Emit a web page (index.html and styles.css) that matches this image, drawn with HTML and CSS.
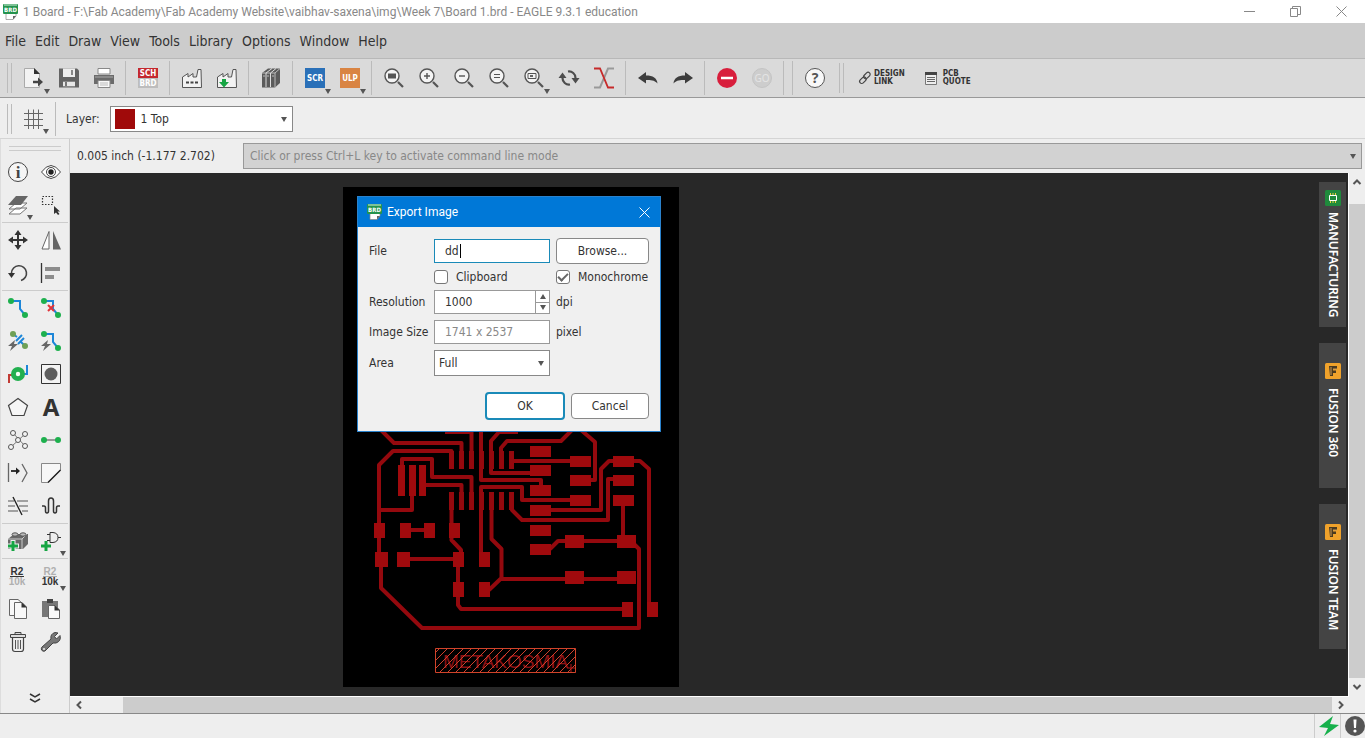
FILE: index.html
```html
<!DOCTYPE html>
<html lang="en">
<head>
<meta charset="utf-8">
<title>1 Board - EAGLE 9.3.1 education</title>
<link rel="stylesheet" href="styles.css">
</head>
<body>
<svg class="defs" aria-hidden="true">
  <symbol id="brd" viewBox="0 0 16 16"><path d="M3 8h10v4l-3 3.500H3z" fill="#fff" stroke="#888" stroke-width=".7"/><path d="M10 15.500V12h3z" fill="#666"/><rect x="0" y="0" width="15" height="10" rx="1" fill="#24934d"/><path d="M1 1h13" stroke="#d7f0df"/><text x="7.500" y="8" class="t-brd">BRD</text></symbol>
  <symbol id="lens" viewBox="-12.500 -12.500 25 25"><path d="M4 4L9 9" stroke="#555" stroke-width="2.200"/><circle cx="-2" cy="-2" r="7" fill="#f4f4f4" stroke="#555" stroke-width="1.400"/></symbol>
  <symbol id="fusion" viewBox="0 0 16 16"><rect width="16" height="16" rx="1.500" fill="#f0a22b"/><path d="M4 3h8v3H8v1.500h3V10H8v3H5z" fill="#4b3a20"/><path d="M6 4v8M8 6h4" stroke="#cf9b54" stroke-width="1"/></symbol>
</svg>

<header class="titlebar">
  <svg class="app-icon"><use href="#brd"/></svg>
  <h1>1 Board - F:\Fab Academy\Fab Academy Website\vaibhav-saxena\img\Week 7\Board 1.brd - EAGLE 9.3.1 education</h1>
  <div class="win-controls">
    <button aria-label="Minimize"><svg viewBox="0 0 11 11"><path d="M0 5.500h11"/></svg></button>
    <button aria-label="Restore"><svg viewBox="0 0 11 11"><path d="M.5 2.500h7v8h-7zM2.500 2.500v-2h8v8h-3"/></svg></button>
    <button aria-label="Close"><svg viewBox="0 0 11 11"><path d="M.5 .5l10 10M10.500 .5l-10 10"/></svg></button>
  </div>
</header>

<nav class="menubar">
  <button>File</button><button>Edit</button><button>Draw</button><button>View</button><button>Tools</button><button>Library</button><button>Options</button><button>Window</button><button>Help</button>
</nav>

<div class="toolbar">
  <span class="grip"></span>
  <button aria-label="Open"><svg class="ico"><path d="M-9.500 -9.500H.5L5.500 -4.500V9.500H-9.500z" fill="#f3f3f3" stroke="#aaa"/><path d="M0 -10V-4H6z" fill="#333"/><path d="M-1 4h6" stroke="#444" stroke-width="2.500"/><path d="M4 -.5L9 4L4 8.500z" fill="#444"/><path class="caret" d="M10 11h6l-3 5z"/></svg></button>
  <button aria-label="Save"><svg class="ico"><path d="M-10 -9.500H8L10 -7.500V9.500H-10z" fill="#636363"/><path d="M-6 -9.500H6V-1H-6z" fill="#ededed"/><path d="M2 -8h2v5H2zM-6 3H6V9H-6z" fill="#888"/><path d="M-6 4H6V8H-6z" fill="#e8e8e8"/><path d="M-4 4h2v4h-2z" fill="#777"/></svg></button>
  <button aria-label="Print"><svg class="ico"><path d="M-6 -9.500H6V-4H-6z" fill="#fff" stroke="#888"/><path d="M-10 -3H10V6H-10z" fill="#6b6b6b"/><path d="M-9 -1H9" stroke="#aaa"/><path d="M-6 2.500H6V9.500H-6z" fill="#f8f8f8" stroke="#888"/><path d="M-4 5h8M-4 7h8" stroke="#bbb"/></svg></button>
  <span class="sep"></span>
  <button aria-label="Schematic / Board"><svg class="ico"><path d="M-10 -10H10V0H-10z" fill="#c4282e"/><path d="M-10 0H10V10H-10z" fill="#bdbdbd"/><text x="0" y="-2" class="t-tag">SCH</text><text x="0" y="8" class="t-tag">BRD</text></svg></button>
  <span class="sep"></span>
  <button aria-label="CAM"><svg class="ico"><path d="M-9.500 9.500V-1L-4 -4.500V-1L1 -4.500V-1H4.500L6 -8.500H9L9.500 9.500z" fill="#f2f2f2" stroke="#555"/><path d="M-6 4.500H6" stroke="#444" stroke-width="2" stroke-dasharray="3 1.500"/></svg></button>
  <button aria-label="Export CAM"><svg class="ico"><path d="M-9.500 9.500V-1L-4 -4.500V-1L1 -4.500V-1H4.500L6 -8.500H9L9.500 9.500z" fill="#f2f2f2" stroke="#555"/><path d="M-5 1h4v3h3L-3 9.500L-8 4h3z" fill="#16a543"/></svg></button>
  <span class="sep"></span>
  <button aria-label="Library manager"><svg class="ico"><path d="M-9 -5L-3 -9.500H9V5L4 9.500H-9z" fill="#5b5b5b"/><path d="M-9 -5H4V9.500M4 -5L9 -9.500" fill="none" stroke="#bbb"/><path d="M-5 -5V9M-.5 -5V9M-5 -5L1 -9.500M-.5 -5L5 -9.500" stroke="#ddd"/><path d="M-8 -2h2M-4 -2h2M1 -2h2" stroke="#bbb"/></svg></button>
  <span class="sep"></span>
  <button aria-label="Script"><svg class="ico"><path d="M-10 -10H10V10H-10z" fill="#2a70b8"/><text x="0" y="3" class="t-tag">SCR</text><path class="caret" d="M10 11h6l-3 5z"/></svg></button>
  <button aria-label="ULP"><svg class="ico"><path d="M-10 -10H10V10H-10z" fill="#d98443"/><text x="0" y="3" class="t-tag">ULP</text><path class="caret" d="M10 11h6l-3 5z"/></svg></button>
  <span class="sep"></span>
  <button aria-label="Zoom fit"><svg class="ico"><use href="#lens" x="-12.500" y="-12.500" width="25" height="25"/><path d="M-6 -4.500H2V.5H-6z" fill="#555"/></svg></button>
  <button aria-label="Zoom in"><svg class="ico"><use href="#lens" x="-12.500" y="-12.500" width="25" height="25"/><path d="M-5 -2H1M-2 -5V1" stroke="#555" stroke-width="1.400"/></svg></button>
  <button aria-label="Zoom out"><svg class="ico"><use href="#lens" x="-12.500" y="-12.500" width="25" height="25"/><path d="M-5 -2H1" stroke="#555" stroke-width="1.400"/></svg></button>
  <button aria-label="Zoom redraw"><svg class="ico"><use href="#lens" x="-12.500" y="-12.500" width="25" height="25"/><path d="M-5 -3.500H1M-5 -.5H1" stroke="#555" stroke-width="1.200"/></svg></button>
  <button aria-label="Zoom select"><svg class="ico"><use href="#lens" x="-12.500" y="-12.500" width="25" height="25"/><path d="M-6 -4.500H2V.5H-6z" fill="none" stroke="#555"/><path d="M-4 -3h3v2h-3z" fill="#666"/><path class="caret" d="M10 11h6l-3 5z"/></svg></button>
  <button aria-label="Refresh"><svg class="ico"><path d="M-1 -6.500A6.500 6.500 0 0 1 6.500 0M1 6.500A6.500 6.500 0 0 1 -6.500 0" fill="none" stroke="#4d4d4d" stroke-width="2.200"/><path d="M2.500 0H10.500L6.500 5.500zM-10.500 0H-2.500L-6.500 -5.500z" fill="#4d4d4d"/></svg></button>
  <button aria-label="Swap"><svg class="ico"><path d="M-10 9.500H-4L4 -9.500H10" fill="none" stroke="#999" stroke-width="2"/><path d="M-10 -9.500H-4L4 9.500H10" fill="none" stroke="#c62a2a" stroke-width="1.800"/></svg></button>
  <span class="sep"></span>
  <button aria-label="Undo"><svg class="ico"><path d="M-10 0L-2 -6V-2.500C5 -2.500 9 0 9.500 5.500C6 2 3 2 -2 2V5.500z" fill="#3d3d3d"/></svg></button>
  <button aria-label="Redo"><svg class="ico"><path d="M10 0L2 -6V-2.500C-5 -2.500 -9 0 -9.500 5.500C-6 2 -3 2 2 2V5.500z" fill="#3d3d3d"/></svg></button>
  <span class="sep"></span>
  <button aria-label="Stop"><svg class="ico"><circle r="10" fill="#d81e3c"/><path d="M-6 0H6" stroke="#fff" stroke-width="2.500"/></svg></button>
  <button aria-label="Go" disabled><svg class="ico"><circle r="9.500" fill="#cdcdcd" stroke="#c4c4c4"/><text x="0" y="4" class="t-go">GO</text></svg></button>
  <span class="sep"></span><span class="sep"></span>
  <button aria-label="Help"><svg class="ico"><circle r="9.500" fill="#f8f8f8" stroke="#555"/><text x="0" y="5" class="t-help">?</text></svg></button>
  <span class="grip"></span>
  <button class="wide"><svg viewBox="0 0 12 12" width="12" height="12"><g fill="none" stroke="#444" stroke-width="1.200"><rect x="4.500" y="1.500" width="7.500" height="4.200" rx="2.100" transform="rotate(-45 8 4)"/><rect x="0" y="6" width="7.500" height="4.200" rx="2.100" transform="rotate(-45 4 8)"/></g></svg><span>DESIGN<br>LINK</span></button>
  <button class="wide"><svg viewBox="0 0 12 13" width="12" height="13"><path d="M.5 .5h11v12H.5z" fill="#eee" stroke="#777"/><path d="M0 1.500h12" stroke="#444" stroke-width="3"/><path d="M2 5.500h8M2 7.500h8M2 9.500h8" stroke="#666"/></svg><span>PCB<br>QUOTE</span></button>
</div>

<div class="layerbar">
  <span class="grip"></span>
  <button aria-label="Grid"><svg class="ico"><path d="M-10 -5.500H9M-10 .5H9M-10 6.500H9M-5.500 -9.500V10M-.5 -9.500V10M4.500 -9.500V10" stroke="#666"/><path class="caret" d="M9 10h6l-3 5z"/></svg></button>
  <span class="sep"></span>
  <label for="layer">Layer:</label>
  <div class="pick layer"><i class="swatch"></i><select id="layer"><option>1 Top</option></select><svg viewBox="0 0 6 5"><path class="caret" d="M0 0h6l-3 5z"/></svg></div>
</div>

<div class="work">
  <aside class="palette">
    <span class="hgrip"></span>
    <div class="tools">
      <button aria-label="Info"><svg class="ico"><circle r="9.500" fill="#f5f5f5" stroke="#444"/><text x="0" y="6" class="t-info">i</text></svg></button>
      <button aria-label="Show"><svg class="ico"><path d="M-9.500 0Q0 -13 9.500 0Q0 13 -9.500 0z" fill="#fff" stroke="#444"/><circle r="4.500" fill="#fff" stroke="#444"/><circle r="2.700" fill="#222"/></svg></button>
      <button aria-label="Layers"><svg class="ico"><path d="M-9 9L-2 3H9L2 9zM-9 4L-2 -2H9L2 4z" fill="#fff" stroke="#777"/><path d="M-10 0L-2 -9H10L3 0z" fill="#666"/><path class="caret" d="M9 10h6l-3 5z"/></svg></button>
      <button aria-label="Select"><svg class="ico"><path d="M-8.500 -8.500H1.500V-.5H-8.500z" fill="none" stroke="#333" stroke-width="1.200" stroke-dasharray="1.500 1.500"/><path d="M3 1L3 9L5 7.500L7 10L8.500 9L6.500 6.500H9z" fill="#333"/></svg></button>
    </div>
    <div class="tools">
      <button aria-label="Move"><svg class="ico"><path d="M-8 0H8M0 -8V8" stroke="#333" stroke-width="2"/><path d="M-10 0L-5 -3.500V3.500zM10 0L5 -3.500V3.500zM0 -10L-3.500 -5H3.500zM0 10L-3.500 5H3.500z" fill="#333"/></svg></button>
      <button aria-label="Mirror"><svg class="ico"><path d="M-2 -8.500V9H-9z" fill="#fff" stroke="#666"/><path d="M2 -9V9.500H10z" fill="#666"/></svg></button>
      <button aria-label="Rotate"><svg class="ico"><path d="M-6.500 0A7.500 7.500 0 1 1 3 7.500" fill="none" stroke="#444" stroke-width="1.600"/><path d="M-10 0H-3L-6.500 5z" fill="#333"/></svg></button>
      <button aria-label="Align"><svg class="ico"><path d="M-9.500 -10V10" stroke="#333" stroke-width="1.300"/><path d="M-6 -6H9V-2H-6zM-6 2H3V6H-6z" fill="#8c8c8c"/></svg></button>
    </div>
    <div class="tools">
      <button aria-label="Route"><svg class="ico"><path class="wire" d="M-7 -7H2V1L7 7"/><circle class="dot" cx="-7" cy="-7" r="3"/><circle class="dot" cx="7" cy="7" r="3"/></svg></button>
      <button aria-label="Ripup"><svg class="ico"><path class="wire" d="M-7 -7H2V1L7 7"/><circle class="dot" cx="-7" cy="-7" r="3"/><circle class="dot" cx="7" cy="7" r="3"/><path d="M-3 -3L3 3M3 -3L-3 3" stroke="#e0343a" stroke-width="2"/></svg></button>
      <button aria-label="Fast route"><svg class="ico"><path class="wire" d="M-5 -7L-1 -4M3 1L7 5M-2 0L4 -6M0 3L6 -3"/><circle class="leaf" cx="-5" cy="-7" r="3"/><circle class="leaf" cx="7" cy="5" r="3"/><path class="bolt" d="M-3 -1L-10 5H-6L-8 10L0 3H-4z"/></svg></button>
      <button aria-label="Auto route"><svg class="ico"><path class="wire" d="M-7 -7H2V1L7 7"/><circle class="dot" cx="-7" cy="-7" r="3"/><circle class="dot" cx="7" cy="7" r="3"/><path class="bolt" d="M-3 -1L-10 5H-6L-8 10L0 3H-4z"/></svg></button>
      <button aria-label="Via"><svg class="ico"><path d="M-9 9V1H-3" fill="none" stroke="#c23b35" stroke-width="2"/><path class="wire" d="M3 0H9V-9"/><circle r="7" fill="#22b04f"/><circle r="2.200" fill="#f4fff4"/></svg></button>
      <button aria-label="Hole"><svg class="ico"><path d="M-9.500 -9.500H9.500V9.500H-9.500z" fill="#f3f3f3" stroke="#333"/><circle r="6.500" fill="#5e5e5e"/></svg></button>
      <button aria-label="Polygon"><svg class="ico"><path d="M0 -8.500L9.500 -1.500L6 8.500H-6L-9.500 -1.500z" fill="#f6f6f6" stroke="#444" stroke-width="1.200"/></svg></button>
      <button aria-label="Text"><svg class="ico"><text x="0" y="9" class="t-a">A</text></svg></button>
      <button aria-label="Ratsnest"><svg class="ico"><path d="M-7 7L7 -6M-5 -7L7 6" stroke="#777"/><g fill="#f4f4f4" stroke="#555"><circle cx="-5" cy="-7" r="2.500"/><circle cx="7" cy="-6" r="2.500"/><circle cx="-7" cy="7" r="2.500"/><circle cx="7" cy="6" r="2.500"/><circle cx="0" cy="0" r="2.500"/></g></svg></button>
      <button aria-label="Signal"><svg class="ico"><path d="M-7 0H7" stroke="#999" stroke-width="2"/><circle class="dot" cx="-7" r="3"/><circle class="dot" cx="7" r="3"/></svg></button>
      <button aria-label="Split"><svg class="ico"><path d="M-9.500 -10V9M4 -9L9 0L4 9" fill="none" stroke="#666" stroke-width="1.300"/><path d="M-7 -2H0" stroke="#222" stroke-width="1.800"/><path d="M-2 -5.500L2 -2L-2 1.500z" fill="#222"/></svg></button>
      <button aria-label="Miter"><svg class="ico"><path d="M-9.500 9.500V-9.500H9.500V-3L-3 9.500z" fill="#f7f7f7" stroke="#888"/><path d="M9.500 -3L-3 9.500" stroke="#222" stroke-width="1.500"/></svg></button>
      <button aria-label="Slice"><svg class="ico"><path d="M-10 -5H-4M-1 -5H10M-10 0H-3M1 0H10M-10 5H0M4 5H10" stroke="#888" stroke-width="1.300"/><path d="M-5 -9L4 9" stroke="#222" stroke-width="1.400"/></svg></button>
      <button aria-label="Meander"><svg class="ico"><path d="M-9 0H-7Q-5.500 0 -5.500 2V5Q-5.500 7 -4 7Q-2.500 7 -2.500 5V-5Q-2.500 -8 0 -8Q2.500 -8 2.500 -5V5Q2.500 7 4 7Q5.500 7 5.500 5V2Q5.500 0 7 0H9" fill="none" stroke="#333" stroke-width="1.500"/></svg></button>
    </div>
    <div class="tools">
      <button aria-label="Add part"><svg class="ico"><path d="M-10 -2L-4 -7H10V3L5 8H-10z" fill="#696969"/><path d="M-10 -2H4L9 -7M4 -2V8" fill="none" stroke="#ccc"/><g fill="#bbb" stroke="#555"><ellipse cx="-3" cy="-6.500" rx="3" ry="1.700"/><ellipse cx="5" cy="-6.500" rx="3" ry="1.700"/></g><path d="M-11 5H1M-5 -1V11" stroke="#eee" stroke-width="5"/><path class="plus" d="M-10 5H0M-5 0V10"/></svg></button>
      <button aria-label="Add gate"><svg class="ico"><path d="M-1 -8.500H2Q7 -8 7 -3.500Q7 1 2 1.500H-1zM-4 -6.500H-1M-4 -.5H-1M7 -3.500H10" fill="none" stroke="#333"/><path class="plus" d="M-10 5H0M-5 0V10"/><path class="caret" d="M9 10h6l-3 5z"/></svg></button>
    </div>
    <div class="tools">
      <button aria-label="Name"><svg class="ico"><text x="-1" y="-1" class="t-r">R2</text><path d="M-8 .5H6" stroke="#333"/><text x="-1" y="9" class="t-r pale">10k</text></svg></button>
      <button aria-label="Value"><svg class="ico"><text x="-1" y="-1" class="t-r pale">R2</text><path d="M-8 .5H6" stroke="#aaa"/><text x="-1" y="9" class="t-r">10k</text><path class="caret" d="M9 10h6l-3 5z"/></svg></button>
      <button aria-label="Copy"><svg class="ico"><path d="M-8.500 -9.500H0L4 -6V6.500H-8.500z" fill="#f8f8f8" stroke="#666"/><path d="M-3.500 -6.500H4L8.500 -2V9.500H-3.500z" fill="#f8f8f8" stroke="#666"/><path d="M3.500 -7L9 -1.500H3.500z" fill="#333"/></svg></button>
      <button aria-label="Paste"><svg class="ico"><path d="M-9 -8H7V8H-9z" fill="#777"/><path d="M-4 -10H2V-6H-4z" fill="#444"/><path d="M-2.500 -3.500H4L8.500 1V9.500H-2.500z" fill="#fafafa" stroke="#666"/><path d="M3.500 -4L9 1.500H3.500z" fill="#333"/></svg></button>
      <button aria-label="Delete"><svg class="ico"><path d="M-5.500 -4.500H5.500V7Q5.500 9.500 3 9.500H-3Q-5.500 9.500 -5.500 7z" fill="#eee" stroke="#444" stroke-width="1.200"/><path d="M-7.500 -7.500H7.500V-4.500H-7.500zM-3 -7.500V-9.500H3V-7.500" fill="#ddd" stroke="#444"/><path d="M-2.500 -2V7M0 -2V7M2.500 -2V7" stroke="#555"/></svg></button>
      <button aria-label="Properties"><svg class="ico"><path d="M-9 5L0 -3Q-1 -8 4 -9.500L7 -9L3.500 -5.500L5.500 -3L9 -6.500Q10.500 -1 5 1L2 1L-6 9Q-8 10 -9.500 8Q-10 6 -9 5z" fill="#777" stroke="#444"/><circle cx="-7" cy="7" r="1" fill="#eee"/></svg></button>
    </div>
    <button class="more" aria-label="More tools"><svg viewBox="0 0 10 10" width="10" height="10"><path d="M0 1l5 3l5-3M0 6l5 3l5-3" fill="none" stroke="#333" stroke-width="1.500"/></svg></button>
  </aside>

  <main class="main">
    <div class="command">
      <output>0.005 inch (-1.177 2.702)</output>
      <div class="cmd-field"><input type="text" aria-label="Command line" placeholder="Click or press Ctrl+L key to activate command line mode"><svg viewBox="0 0 6 5"><path class="caret" d="M0 0h6l-3 5z"/></svg></div>
    </div>
    <div class="viewport">
      <div class="canvas">
        <svg class="board" viewBox="343 187 336 500" role="img" aria-label="Board layout">
          <defs><pattern id="hatch" width="8" height="8" patternUnits="userSpaceOnUse"><path d="M-1 9L9 -1M-1 1L1 -1M7 9L9 7" stroke="#d0402c" stroke-width="1"/></pattern></defs>
          <path fill="#000" d="M343 187h336v500H343z"/>
          <g class="trace">
            <path d="M381 430L394 443H461.500V469M379 540V465L393 451H451.500V469M402 467V459H432V477H471.500V510M422 485H461.500V510M412 496V510H379M451.500 492V540L461 550V560"/>
            <path d="M445 432H471.500V469M481 432V480H541V487M518 432H499L491 441V473H531M572 430L561 441H507L501 448V469M511.500 451V469M512 461H571M581 430L595 442V480H591"/>
            <path d="M613 461H609L601 469V510H550M634 461H640L649 469V603M613 479H608V520H522L512 510V492M623 506V536M565 541H558L550 549M584 541H618M634 544L639 549V628H422L381 588V560"/>
            <path d="M481 553V487H522V500H571M491.500 492V539L501.500 549V578L489 590M501 579H617M501.500 492V510M458 567V605L461 609H622M411 530H424M410 559H453M379 538V553M458 567V583"/>
          </g>
          <path class="pin" d="M449 451h5v18h-5zM459 451h5v18h-5zM469 451h5v18h-5zM479 451h5v18h-5zM489 451h5v18h-5zM499 451h5v18h-5zM509 451h5v18h-5zM449 492h5v18h-5zM459 492h5v18h-5zM469 492h5v18h-5zM479 492h5v18h-5zM489 492h5v18h-5zM499 492h5v18h-5zM509 492h5v18h-5z"/>
          <path class="pad" d="M398 465h7v31h-7zM409 465h7v31h-7zM419 465h7v31h-7zM530 446h21v11h-21zM530 465h21v11h-21zM530 485h21v11h-21zM530 505h21v11h-21zM530 525h21v11h-21zM530 544h21v11h-21zM570 456h21v11h-21zM570 475h21v11h-21zM570 495h21v11h-21zM613 456h21v11h-21zM613 475h21v11h-21zM613 495h21v11h-21z"/>
          <path class="pad" d="M374 523h11v15h-11zM400 523h11v15h-11zM424 523h11v15h-11zM449 523h11v15h-11zM375 552h13v15h-13zM397 552h13v15h-13zM453 552h11v15h-11zM479 552h11v15h-11zM453 582h11v15h-11zM479 582h11v15h-11zM565 535h19v13h-19zM617 535h19v13h-19zM565 571h19v13h-19zM617 571h19v13h-19zM622 602h11v15h-11zM647 602h11v15h-11z"/>
          <text x="443" y="668" class="t-meta">METAKOSMIA</text>
          <path d="M435.500 648.500h140v24h-140z" fill="url(#hatch)" stroke="#d0432a"/>
          <path d="M567 668h8M571 664v8" stroke="#b01818"/>
        </svg>
        <div class="tabs">
          <button class="long"><svg viewBox="0 0 16 16"><rect width="16" height="16" rx="1.500" fill="#1f8a3c"/><path d="M4.500 5.500h7v5h-7z" fill="#1f8a3c" stroke="#fff"/><path d="M5.500 3v2M8 3v2M10.500 3v2M5.500 11v2M8 11v2M10.500 11v2" stroke="#e8d33a"/></svg><span>MANUFACTURING</span></button>
          <button><svg><use href="#fusion"/></svg><span>FUSION 360</span></button>
          <button><svg><use href="#fusion"/></svg><span>FUSION TEAM</span></button>
        </div>

        <form class="dialog" aria-label="Export Image">
          <div class="dialog-title"><svg class="app-icon"><use href="#brd"/></svg><h2>Export Image</h2><button type="button" aria-label="Close dialog"><svg viewBox="0 0 11 11" width="11" height="11"><path d="M.5 .5l10 10M10.500 .5l-10 10" stroke="#fff"/></svg></button></div>
          <div class="fields">
            <label for="file">File</label>
            <div class="field focus"><input id="file" type="text" value="dd"><i class="cursor"></i></div>
            <button type="button" class="btn">Browse...</button>

            <label class="check clip"><input type="checkbox"><span>Clipboard</span></label>
            <label class="check"><input type="checkbox" checked><span>Monochrome</span></label>

            <label for="res">Resolution</label>
            <div class="field"><input id="res" type="text" value="1000"><span class="spin"><button type="button" aria-label="Increase"><svg viewBox="0 0 6 5"><path class="caret" d="M0 5h6l-3-5z"/></svg></button><button type="button" aria-label="Decrease"><svg viewBox="0 0 6 5"><path class="caret" d="M0 0h6l-3 5z"/></svg></button></span></div>
            <span>dpi</span>

            <label class="gap" for="size">Image Size</label>
            <div class="field gap"><input id="size" type="text" value="1741 x 2537" readonly class="muted"></div>
            <span class="gap">pixel</span>

            <label class="gap" for="area">Area</label>
            <div class="pick gap"><select id="area"><option>Full</option></select><svg viewBox="0 0 6 5"><path class="caret" d="M0 0h6l-3 5z"/></svg></div>
          </div>
          <div class="actions"><button type="button" class="btn primary">OK</button><button type="button" class="btn">Cancel</button></div>
        </form>
      </div>
      <div class="vscroll"><button aria-label="Scroll up"><svg viewBox="0 0 8 6"><path d="M.5 5L4 1.500L7.500 5"/></svg></button><span class="thumb"></span><button aria-label="Scroll down"><svg viewBox="0 0 8 6"><path d="M.5 1L4 4.500L7.500 1"/></svg></button></div>
      <div class="hscroll"><button aria-label="Scroll left"><svg viewBox="0 0 6 8"><path d="M5 .5L1.500 4L5 7.500"/></svg></button><span class="thumb"></span><button aria-label="Scroll right"><svg viewBox="0 0 6 8"><path d="M1 .5L4.500 4L1 7.500"/></svg></button></div>
    </div>
  </main>
</div>

<footer class="status">
  <button aria-label="Connection"><svg viewBox="0 0 20 20" width="20" height="20"><path d="M14 0L0 11L9 12L5 20L20 9L11 8z" fill="#16b04b"/></svg></button>
  <button aria-label="Alerts"><svg viewBox="0 0 20 20" width="20" height="20"><circle cx="10" cy="10" r="10" fill="#555"/><path d="M8.500 3.500h3l-.5 8.500H9z" fill="#fff"/><circle cx="10" cy="15" r="1.600" fill="#fff"/></svg></button>
</footer>
</body>
</html>
```
FILE: styles.css
```css
* { box-sizing: border-box; }
html, body { height: 100%; }
body {
  margin: 0;
  display: flex;
  flex-direction: column;
  background: #eee;
  color: #333;
  font: 12px/16px "DejaVu Sans Condensed", "Noto Sans", sans-serif;
  overflow: hidden;
}
button, input, select { font: inherit; color: inherit; margin: 0; padding: 0; border: 0; background: none; }
button svg { display: block; overflow: visible; }
h1, h2 { margin: 0; font: 12px/16px Roboto, sans-serif; }
symbol { overflow: visible; }
.defs { position: absolute; width: 0; height: 0; }
.caret { fill: #555; stroke: none; }

.titlebar { display: flex; align-items: center; height: 23px; flex: none; background: #fff; padding-left: 3px; }
.titlebar h1 { margin-left: 4px; color: #888; flex: 1; white-space: nowrap; }
.app-icon { width: 16px; height: 16px; flex: none; overflow: visible; }
.win-controls { display: flex; padding-right: 1px; }
.win-controls button { width: 46px; height: 20px; display: grid; place-items: center; }
.win-controls svg { width: 11px; height: 11px; fill: none; stroke: #888; }

.menubar { display: flex; align-items: center; gap: 9px; height: 35px; flex: none; padding-left: 5px; background: #ccc; font-size: 14px; line-height: 18px; }

.toolbar { display: flex; align-items: center; height: 40px; flex: none; background: #dadada; border-top: 1px solid #b8b8b8; border-bottom: 1px solid #999; }
.toolbar > button, .layerbar > button { width: 35px; height: 34px; padding: 1px 0 0 2px; flex: none; display: grid; place-items: center; }
.ico { width: 1px; height: 1px; }
.grip { width: 5px; height: 30px; margin: 0 4px 0 7px; border: solid #bbb; border-width: 0 1px; flex: none; }
.sep { width: 1px; height: 34px; margin: 0 4px; background: #bbb; flex: none; }
.toolbar > .wide { width: auto; padding: 0; display: flex; align-items: center; gap: 3px; margin-left: 11px; font: 700 8px/8px "DejaVu Sans Condensed", sans-serif; text-align: left; }
.toolbar > .wide + .wide { margin-left: 20px; gap: 6px; }

.layerbar { display: flex; align-items: center; height: 41px; flex: none; padding-top: 2px; border-bottom: 1px solid #d4d4d4; }
.layerbar label { margin: 0 10px 0 6px; }
.pick { display: flex; align-items: center; background: #fff; border: 1px solid #888; height: 26px; }
.pick select { appearance: none; flex: 1; min-width: 0; padding-left: 4px; outline: 0; }
.pick svg, .cmd-field svg { width: 6px; height: 5px; margin-right: 5px; flex: none; }
.layer { width: 183px; }
.swatch { width: 20px; height: 20px; margin: 0 2px 0 4px; background: #a00a0a; }

.work { flex: 1; min-height: 0; display: flex; }
.palette { width: 70px; flex: none; padding-top: 7px; border-left: 1px solid #ddd; border-right: 1px solid #ccc; display: flex; flex-direction: column; }
.hgrip { height: 5px; margin: 0 8px 4px; border: solid #ccc; border-width: 1px 0; flex: none; }
.tools { display: grid; grid-template-columns: 33px 33px; grid-auto-rows: 33px; margin: 0 1px; }
.tools + .tools { border-top: 1px solid #ccc; margin-top: 1px; }
.tools button { display: grid; place-items: center; padding-top: 2px; }
.more { display: grid; place-items: center; margin: auto auto 10px; }
.wire { fill: none; stroke: #1d86d8; stroke-width: 2; }
.dot { fill: #1db04e; }
.leaf { fill: #6fa056; }
.bolt { fill: #666; }
.plus { fill: none; stroke: #16a543; stroke-width: 3; }

.main { flex: 1; min-width: 0; display: flex; flex-direction: column; }
.command { display: flex; align-items: center; height: 34px; flex: none; padding: 0 3px 0 7px; }
.command output { width: 166px; flex: none; }
.cmd-field { flex: 1; display: flex; align-items: center; height: 26px; background: #d2d2d2; border: 1px solid #999; }
.cmd-field input { flex: 1; padding-left: 6px; outline: 0; }
.cmd-field input::placeholder { color: #888; opacity: 1; }

.viewport { flex: 1; min-height: 0; display: grid; grid-template: minmax(0, 1fr) 17px / minmax(0, 1fr) 16px; }
.canvas { position: relative; display: flex; align-items: flex-start; background: #282828; border-right: 1px solid #fff; overflow: hidden; }
.board { width: 336px; height: 500px; margin: 14px 0 0 273px; flex: none; }
.trace { fill: none; stroke: #94090e; stroke-width: 4; stroke-linejoin: round; }
.pin { fill: #94090e; }
.pad { fill: #a00a0d; }
.tabs { display: flex; flex-direction: column; gap: 16px; margin: 9px 2px 0 auto; }
.tabs button { width: 27px; height: 145px; padding-top: 20px; display: flex; flex-direction: column; align-items: center; gap: 9px; background: #444; color: #fff; font: 600 12px/16px "Noto Sans", sans-serif; }
.tabs .long { padding-top: 8px; gap: 6px; }
.tabs svg { width: 16px; height: 16px; flex: none; }
.tabs span { writing-mode: vertical-rl; white-space: nowrap; }

.vscroll { display: flex; flex-direction: column; }
.hscroll { display: flex; border-top: 1px solid #fff; }
.vscroll button { height: 18px; display: grid; place-items: center; }
.vscroll button:first-child { height: 31px; padding-bottom: 13px; }
.hscroll button { width: 17px; display: grid; place-items: center; }
.hscroll button:first-child { width: 53px; padding-right: 36px; }
.thumb { flex: 1; background: #ccc; }
.vscroll svg, .hscroll svg { fill: none; stroke: #555; stroke-width: 2; }
.vscroll svg { width: 8px; height: 6px; }
.hscroll svg { width: 6px; height: 8px; }

.status { display: flex; justify-content: flex-end; height: 25px; flex: none; border-top: 1px solid #888; }
.status button { border-left: 1px solid #ccc; padding-left: 4px; width: 26px; }
.status button + button { width: 25px; }

.dialog { position: absolute; left: 287px; top: 23px; width: 304px; background: #f0f0f0; border: 1px solid #2a82cc; }
.dialog-title { display: flex; align-items: center; height: 30px; padding: 0 10px 0 9px; background: #0078d7; color: #fff; }
.dialog-title h2 { flex: 1; margin-left: 4px; }
.fields { display: grid; grid-template-columns: 59px minmax(0, 1fr) 93px; column-gap: 6px; align-items: center; padding: 11px 11px 0; }
.fields > * { white-space: nowrap; }
.field { display: flex; position: relative; height: 24px; background: #fff; border: 1px solid #999; }
.field input { flex: 1; min-width: 0; padding-left: 10px; outline: 0; }
.field .muted { color: #888; }
.focus { border-color: #1a8ab8; }
.cursor { position: absolute; left: 25px; top: 4px; width: 1px; height: 14px; background: #000; }
.gap { margin-top: 6px; }
.btn { height: 26px; background: #fff; border: 1px solid #888; border-radius: 4px; }
.check { display: flex; align-items: center; height: 26px; gap: 8px; }
.clip { grid-column: 2; }
.check input { appearance: none; width: 14px; height: 14px; flex: none; border: 1px solid #777; border-radius: 3px; background: #fff; display: grid; place-items: center; }
.check input:checked::before { content: ""; width: 8px; height: 4px; border: solid #666; border-width: 0 0 2px 2px; rotate: -45deg; translate: 0 -1px; }
.spin { width: 14px; display: flex; flex-direction: column; border-left: 1px solid #999; }
.spin button { flex: 1; display: grid; place-items: center; }
.spin button + button { border-top: 1px solid #999; }
.spin svg { width: 6px; height: 5px; }
.actions { display: flex; align-items: center; justify-content: flex-end; gap: 6px; padding: 16px 11px 11px; }
.actions .btn { width: 78px; }
.actions .primary { width: 80px; height: 28px; border: 2px solid #1a8ab8; }

text { font-family: "Noto Sans", sans-serif; text-anchor: middle; fill: #333; }
.t-brd { font: 700 6px "DejaVu Sans Condensed", sans-serif; fill: #fff; }
.t-tag { font: 700 8px "DejaVu Sans Condensed", sans-serif; fill: #fff; }
.t-go { font-size: 10px; fill: #e4e4e4; }
.t-help { font-size: 14px; font-weight: 700; fill: #555; }
.t-info { font: 700 17px "Liberation Serif", serif; fill: #444; }
.t-a { font: 700 24px "Noto Sans", sans-serif; }
.t-r { font: 700 10px "Liberation Sans", sans-serif; }
.t-r.pale { fill: #b0b0b0; }
.t-meta { font: 19px "Liberation Sans", sans-serif; fill: #8c1014; text-anchor: start; }
```
